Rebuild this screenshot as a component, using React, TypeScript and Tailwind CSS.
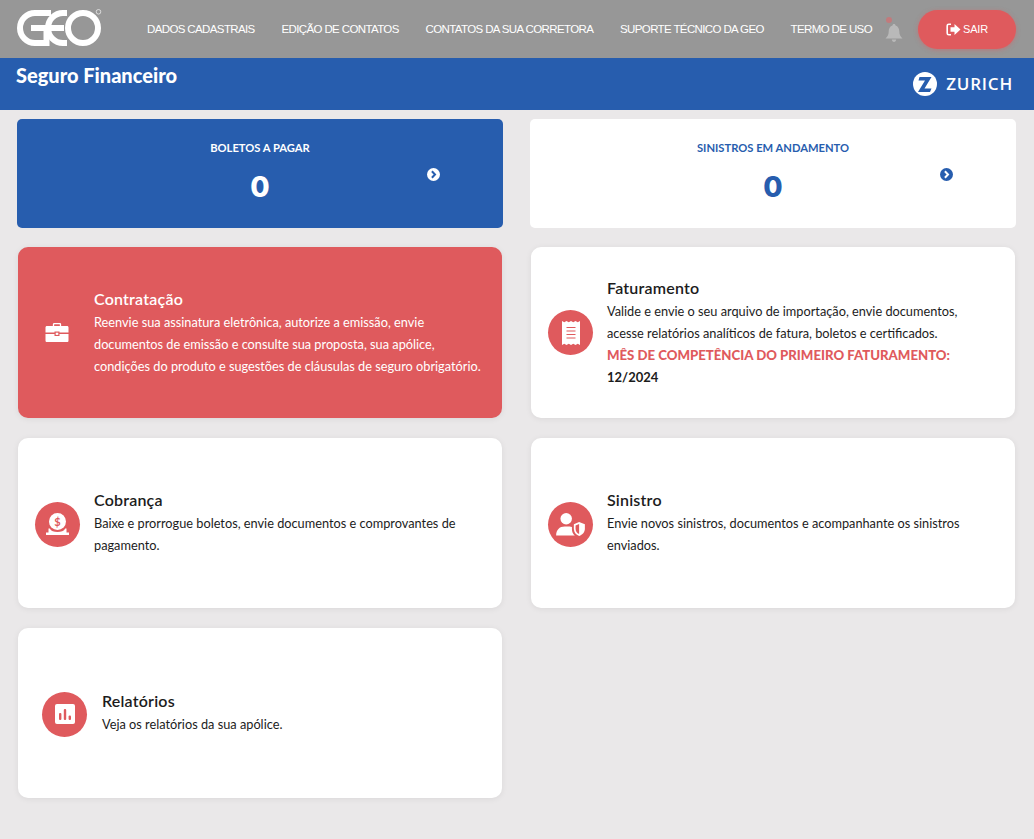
import React from "react";

const sans = "font-['Lato','Open_Sans',sans-serif]";

function GeoLogo() {
  return (
    <svg width="88" height="40" viewBox="0 0 88 40" className="shrink-0" fill="none">
      <g transform="translate(0 1)" stroke="#fff" strokeWidth="6">
        <path d="M34 3 H18 A15 15 0 0 0 18 33 H29.500 V18 H14" />
        <path d="M50 3 H46 A15 15 0 0 0 46 33 H50 M20 18 H47" />
        <circle cx="66" cy="18" r="15" />
        <circle cx="81.500" cy="1.800" r="2.300" strokeWidth="0.900" opacity="0.700" />
      </g>
    </svg>
  );
}

function ZurichMark() {
  return (
    <svg width="24" height="24" viewBox="0 0 24 24" className="shrink-0">
      <circle cx="12" cy="12" r="12" fill="#fff" />
      <path d="M6.500 5H18.500L11.500 16.500H18.500L17 20H5L12 8.500H5.500Z" fill="#275dae" />
    </svg>
  );
}

function Bell() {
  return (
    <div className="relative w-[18px] h-[22px] shrink-0 mt-[3px]">
      <svg width="18" height="18" viewBox="0 0 18 18" className="absolute top-[4px] left-0">
        <path d="M9 0C10 0 10.500.7 10.500 1.500 13 2.200 14.300 4.500 14.300 7.500 14.300 11 15.500 12.500 17.500 14.500H.5C2.500 12.500 3.700 11 3.700 7.500 3.700 4.500 5 2.200 7.500 1.500 7.500.7 8 0 9 0ZM6.800 15.500H11.200C11 17 10.200 18 9 18S7 17 6.800 15.500Z" fill="#b9b9b9" />
      </svg>
      <span className="absolute left-[1px] -top-[3px] w-[6px] h-[6px] rounded-full bg-[#c27a7c]" />
    </div>
  );
}

function ExitIcon() {
  return (
    <svg width="15" height="13" viewBox="0 0 15 13" className="shrink-0">
      <path d="M5 1.200H2.800C1.800 1.200 1.200 1.800 1.200 2.800V10.200C1.200 11.200 1.800 11.800 2.800 11.800H5" fill="none" stroke="#fff" strokeWidth="1.600" />
      <path d="M4.500 4.200H8.500V1L14.500 6.500 8.500 12V8.800H4.500Z" fill="#fff" />
    </svg>
  );
}

function Chevron({ bg, fg }: { bg: string; fg: string }) {
  return (
    <svg width="13" height="13" viewBox="0 0 13 13" className="shrink-0">
      <circle cx="6.500" cy="6.500" r="6.500" fill={bg} />
      <path d="M4.900 3.300 8 6.500 4.900 9.700" fill="none" stroke={fg} strokeWidth="2" />
    </svg>
  );
}

function Briefcase() {
  return (
    <svg width="24" height="20" viewBox="0 0 24 20">
      <path d="M8.500 3V1.500C8.500.8 9 .5 9.600.5H14.400C15 .5 15.500.8 15.500 1.500V3" fill="none" stroke="#fff" strokeWidth="1.300" />
      <path d="M2 3H22C23 3 23.500 3.600 23.500 4.500V9.500H14.500V8.500H9.500V9.500H.5V4.500C.5 3.600 1 3 2 3Z" fill="#fff" />
      <path d="M.5 11H9.500V13H14.500V11H23.500V17.500C23.500 18.500 23 19 22 19H2C1 19 .5 18.500 .5 17.500Z" fill="#fff" />
      <rect x="10.700" y="9.700" width="2.600" height="2.200" fill="#fff" />
    </svg>
  );
}

function Receipt() {
  return (
    <svg width="18" height="24" viewBox="0 0 18 24">
      <path d="M0 0 2.250 1.200 4.500 0 6.750 1.200 9 0 11.250 1.200 13.500 0 15.750 1.200 18 0V24L15.750 22.800 13.500 24 11.250 22.800 9 24 6.750 22.800 4.500 24 2.250 22.800 0 24Z" fill="#fff" />
      <path d="M4.500 6.500H13.500M4.500 10H13.500M4.500 13.500H13.500M4.500 17H13.500" stroke="#df5a5d" strokeWidth="1.200" />
    </svg>
  );
}

function Coin() {
  return (
    <svg width="23" height="22" viewBox="0 0 23 22">
      <circle cx="11.500" cy="8.500" r="8.500" fill="#fff" />
      <text x="11.500" y="12.500" textAnchor="middle" fontSize="11" fontWeight="700" fontFamily="Lato, sans-serif" fill="#df5a5d">$</text>
      <path d="M2.500 15.500H3.800C5 18.300 8 19 11.500 19S18 18.300 19.200 15.500H20.500V19.500H23V22H0V19.500H2.500Z" fill="#fff" />
    </svg>
  );
}

function UserShield() {
  return (
    <svg width="29" height="23" viewBox="0 0 30 24">
      <circle cx="10.500" cy="6" r="6" fill="#fff" />
      <path d="M0 23.500C0 17.500 3.500 14 9 14H14C15 14 16 14.200 16.500 14.500V17C16.500 19.500 17.500 22 19.500 23.500Z" fill="#fff" />
      <path d="M24 9.500 30 11.800V16.500C30 20 27.500 22.800 24 24 20.500 22.800 18.500 20 18.500 16.500V11.800Z" fill="#fff" />
      <path d="M24 11.500 20.300 13V16.500C20.300 19 21.700 21 24 22Z" fill="#df5a5d" />
    </svg>
  );
}

function Chart() {
  return (
    <svg width="20" height="20" viewBox="0 0 20 20">
      <rect width="20" height="20" rx="2" fill="#fff" />
      <rect x="4" y="9" width="2.400" height="7" rx="1" fill="#df5a5d" />
      <rect x="8.800" y="5" width="2.400" height="11" rx="1" fill="#df5a5d" />
      <rect x="13.600" y="11.500" width="2.400" height="4.500" rx="1" fill="#df5a5d" />
    </svg>
  );
}

function IconDisc({ children, low }: { children: React.ReactNode; low?: boolean }) {
  return (
    <div className={`w-[45px] h-[45px] rounded-full bg-[#df5a5d] flex items-center justify-center shrink-0 ${low ? "mt-[2px]" : ""}`}>
      {children}
    </div>
  );
}

function Card({
  title,
  icon,
  children,
  red,
  pad = "pl-[17px] pr-[14px]",
}: {
  title: string;
  icon: React.ReactNode;
  children: React.ReactNode;
  red?: boolean;
  pad?: string;
}) {
  return (
    <div
      className={`mx-px rounded-[10px] flex items-center gap-[14px] ${pad} shadow-[0_1px_6px_rgba(0,0,0,0.07)] ${
        red ? "bg-[#df5a5d] text-white" : "bg-white text-[#1c1c1c]"
      }`}
    >
      {icon}
      <div className="min-w-0">
        <h3 className="text-[16px] leading-[20px] mb-[2px] font-semibold tracking-[0.2px]">{title}</h3>
        <div className="text-[12.750px] leading-[22px]">{children}</div>
      </div>
    </div>
  );
}

function Stat({ label, blue }: { label: string; blue?: boolean }) {
  return (
    <div
      className={`h-[109px] rounded-[5px] flex items-start pt-[21px] ${
        blue ? "bg-[#275dae] text-white" : "bg-white text-[#275dae]"
      }`}
    >
      <div className="w-[486px] flex">
        <div className="w-[486px] flex flex-col items-center">
          <div className="text-[11.200px] leading-[16px] font-bold">{label}</div>
          <div className="text-[28px] leading-[36px] font-extrabold mt-[13px] font-['Inter',sans-serif]">0</div>
        </div>
        <div className="-ml-[76px] mt-[28px] w-[13px]">
          {blue ? <Chevron bg="#fff" fg="#275dae" /> : <Chevron bg="#275dae" fg="#fff" />}
        </div>
      </div>
    </div>
  );
}

export default function App() {
  const nav = [
    "DADOS CADASTRAIS",
    "EDIÇÃO DE CONTATOS",
    "CONTATOS DA SUA CORRETORA",
    "SUPORTE TÉCNICO DA GEO",
    "TERMO DE USO",
  ];
  return (
    <div className={`min-h-[839px] bg-[#eae8e9] ${sans}`}>
      <header className="h-[58px] bg-[#979797] flex items-center pl-[17px] pr-[18px]">
        <GeoLogo />
        <nav className="flex items-center gap-[26.800px] ml-[42px] pt-px font-['Liberation_Sans',sans-serif] text-[11.500px] tracking-[-0.620px] text-white whitespace-nowrap">
          {nav.map((n) => (
            <span key={n}>{n}</span>
          ))}
        </nav>
        <div className="ml-[13px]">
          <Bell />
        </div>
        <button className="ml-auto w-[98px] h-[39px] rounded-full bg-[#df5a5d] text-white flex items-center justify-center gap-[2px] font-['Liberation_Sans',sans-serif] text-[11px] tracking-[-0.200px] shadow-[0_1px_4px_rgba(224,90,94,0.5)]">
          <ExitIcon />
          SAIR
        </button>
      </header>

      <div className="h-[52px] bg-[#275dae] flex justify-between pl-[16px] pr-[21px] text-white">
        <h1 className="text-[20px] leading-[22px] font-black pt-[6px] h-fit">Seguro Financeiro</h1>
        <div className="flex items-center gap-[9px] -mt-[1px]">
          <ZurichMark />
          <span className="text-[17px] tracking-[0.800px] font-semibold font-['Open_Sans',sans-serif]">ZURICH</span>
        </div>
      </div>

      <main className="grid grid-cols-[486px_486px] gap-x-[27px] px-[17px] pt-[9px]">
        <Stat label="BOLETOS A PAGAR" blue />
        <Stat label="SINISTROS EM ANDAMENTO" />
        <div className="col-span-2 h-[19px]" />
        <div className="col-span-2 grid grid-cols-[486px_486px] gap-x-[27px] gap-y-[20px] grid-rows-[171px_170px_170px]">
          <Card title="Contratação" red pad="pl-[27px] pr-[14px]" icon={<div className="w-[24px] mr-[11px] flex"><Briefcase /></div>}>
            Reenvie sua assinatura eletrônica, autorize a emissão, envie documentos de emissão e consulte sua proposta, sua apólice, condições do produto e sugestões de cláusulas de seguro obrigatório.
          </Card>
          <Card title="Faturamento" pad="pl-[17px] pr-[40px]" icon={<IconDisc><Receipt /></IconDisc>}>
            Valide e envie o seu arquivo de importação, envie documentos, acesse relatórios analíticos de fatura, boletos e certificados.
            <div className="font-black text-[13.200px] whitespace-nowrap text-[#df5a5d]">MÊS DE COMPETÊNCIA DO PRIMEIRO FATURAMENTO:</div>
            <div className="font-bold text-[13px]">12/2024</div>
          </Card>
          <Card title="Cobrança" icon={<IconDisc low><Coin /></IconDisc>}>
            Baixe e prorrogue boletos, envie documentos e comprovantes de pagamento.
          </Card>
          <Card title="Sinistro" icon={<IconDisc low><UserShield /></IconDisc>}>
            Envie novos sinistros, documentos e acompanhante os sinistros enviados.
          </Card>
          <Card title="Relatórios" pad="pl-[24px] pr-[14px]" icon={<div className="mr-px"><IconDisc low><Chart /></IconDisc></div>}>
            Veja os relatórios da sua apólice.
          </Card>
        </div>
      </main>
    </div>
  );
}
